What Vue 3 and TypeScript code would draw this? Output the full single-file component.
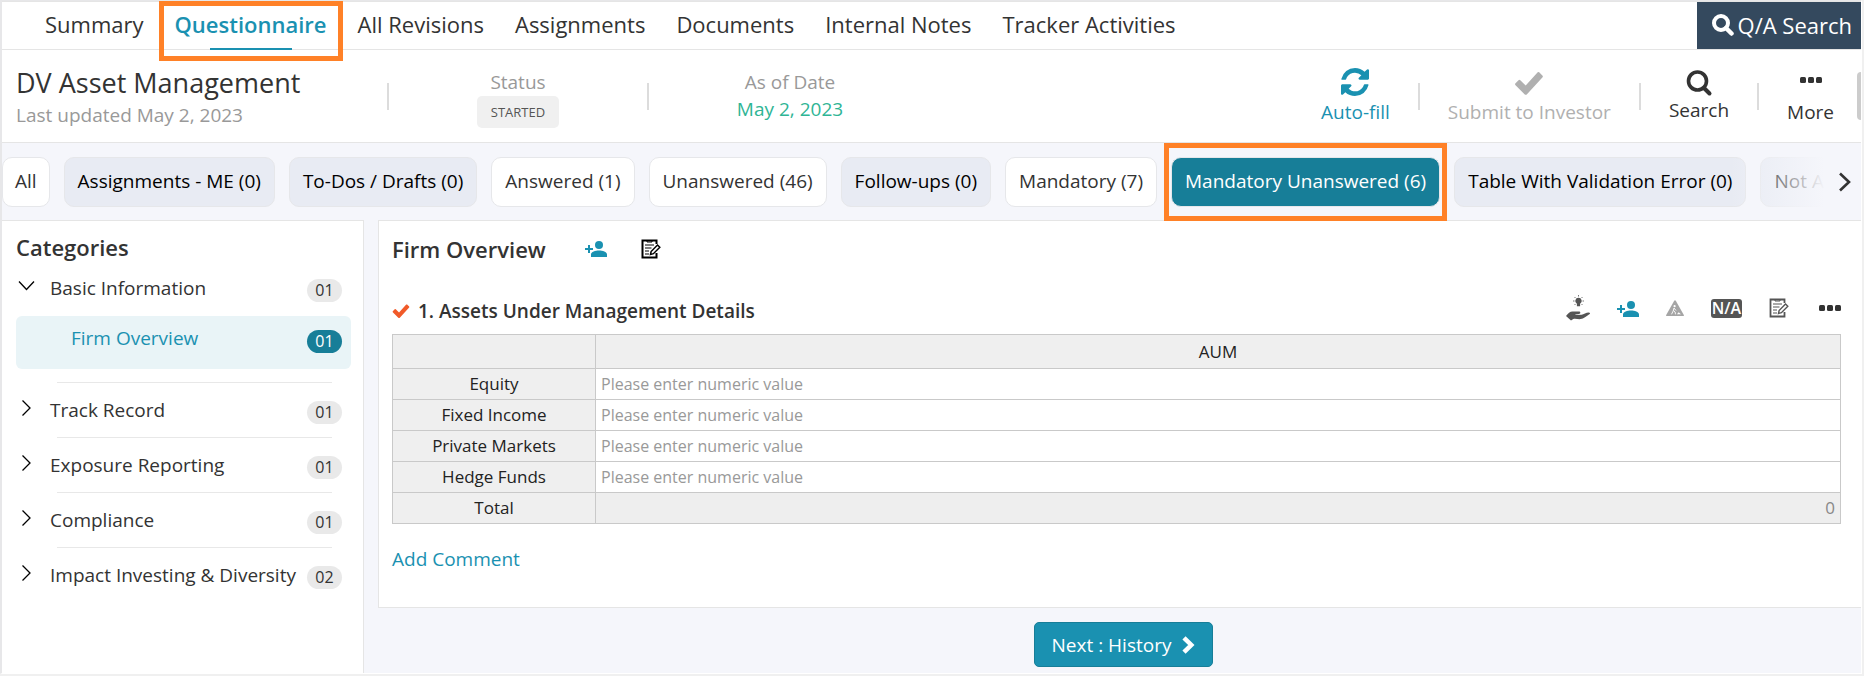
<script setup lang="ts">
import { ref } from 'vue'

interface Filter { label: string; tone: 'plain' | 'muted' | 'active' }
interface Category { name: string; count: string; open?: boolean; children?: { name: string; count: string }[] }

const tabs = ['Summary', 'Questionnaire', 'All Revisions', 'Assignments', 'Documents', 'Internal Notes', 'Tracker Activities']
const activeTab = 'Questionnaire'

const filters: Filter[] = [
  { label: 'All', tone: 'plain' },
  { label: 'Assignments - ME (0)', tone: 'muted' },
  { label: 'To-Dos / Drafts (0)', tone: 'muted' },
  { label: 'Answered (1)', tone: 'plain' },
  { label: 'Unanswered (46)', tone: 'plain' },
  { label: 'Follow-ups (0)', tone: 'muted' },
  { label: 'Mandatory (7)', tone: 'plain' },
  { label: 'Mandatory Unanswered (6)', tone: 'active' },
  { label: 'Table With Validation Error (0)', tone: 'muted' },
  { label: 'Not Applicable (0)', tone: 'muted' },
]

const categories: Category[] = [
  { name: 'Basic Information', count: '01', open: true, children: [{ name: 'Firm Overview', count: '01' }] },
  { name: 'Track Record', count: '01' },
  { name: 'Exposure Reporting', count: '01' },
  { name: 'Compliance', count: '01' },
  { name: 'Impact Investing & Diversity', count: '02' },
]

const rows = ref([
  { name: 'Equity', value: '' },
  { name: 'Fixed Income', value: '' },
  { name: 'Private Markets', value: '' },
  { name: 'Hedge Funds', value: '' },
])
</script>

<template>
  <div class="page">
    <nav class="tabs">
      <a v-for="t in tabs" :key="t" href="#" class="tab" :class="{ current: t === activeTab }">{{ t }}</a>
      <button type="button" class="qa">
        <svg width="22" height="22" viewBox="0 0 22 22" fill="none" stroke="currentColor" aria-hidden="true">
          <circle cx="9" cy="9" r="7" stroke-width="4" />
          <path d="M14 14l5.500 5.500" stroke-width="4.500" stroke-linecap="round" />
        </svg>
        Q/A Search
      </button>
    </nav>

    <header class="head">
      <div class="title">
        <h1>DV Asset Management</h1>
        <p>Last updated May 2, 2023</p>
      </div>
      <i class="sep"></i>
      <div class="meta status">
        <span class="meta-label">Status</span>
        <span class="tag">STARTED</span>
      </div>
      <i class="sep"></i>
      <div class="meta date">
        <span class="meta-label">As of Date</span>
        <span class="meta-date">May 2, 2023</span>
      </div>
      <div class="actions">
        <button type="button" class="action teal">
          <svg width="28" height="28" viewBox="0 0 1536 1536" fill="currentColor" aria-hidden="true">
            <path d="M1511 928q0 5-1 7-64 268-268 434.500T764 1536q-146 0-282.500-55T238 1324l-129 129q-19 19-45 19t-45-19-19-45V960q0-26 19-45t45-19h448q26 0 45 19t19 45-19 45l-137 137q71 66 161 102t187 36q134 0 250-65t186-179q11-17 53-117 8-23 30-23h192q13 0 22.500 9.500t9.500 22.500zm25-800v448q0 26-19 45t-45 19h-448q-26 0-45-19t-19-45 19-45l138-138Q969 256 768 256q-134 0-250 65T332 500q-11 17-53 117-8 23-30 23H50q-13 0-22.500-9.500T18 608v-7q65-268 270-434.500T768 0q146 0 284 55.500T1297 212l130-129q19-19 45-19t45 19 19 45z" />
          </svg>
          <span>Auto-fill</span>
        </button>
        <i class="sep"></i>
        <button type="button" class="action off" disabled>
          <svg width="30" height="26" viewBox="0 0 30 26" fill="currentColor" aria-hidden="true">
            <path d="M4.500 10.200 L1.300 13.600 Q.8 14.200 1.300 14.900 L10.500 24.300 Q11.800 25.300 13 24.300 L28.600 7.200 Q29.200 6.500 28.600 5.700 L25.200 2.300 Q24.400 1.700 23.700 2.300 L11.700 15.400 L6.300 10.200 Q5.400 9.500 4.500 10.200Z" />
          </svg>
          <span>Submit to Investor</span>
        </button>
        <i class="sep"></i>
        <button type="button" class="action search">
          <svg width="28" height="28" viewBox="0 0 28 28" fill="none" stroke="currentColor" aria-hidden="true">
            <circle cx="12.500" cy="12" r="9" stroke-width="3.600" />
            <path d="M19 19l5.500 5.500" stroke-width="4" stroke-linecap="round" />
          </svg>
          <span>Search</span>
        </button>
        <i class="sep"></i>
        <button type="button" class="action more">
          <svg width="22" height="6" viewBox="0 0 22 6" fill="currentColor" aria-hidden="true">
            <rect width="6" height="6" rx="1.500" /><rect x="8" width="6" height="6" rx="1.500" /><rect x="16" width="6" height="6" rx="1.500" />
          </svg>
          <span>More</span>
        </button>
        <i class="thumb"></i>
      </div>
    </header>

    <div class="filters">
      <button v-for="f in filters" :key="f.label" type="button" class="chip" :class="f.tone">{{ f.label }}</button>
      <button type="button" class="next-filters" aria-label="Scroll filters">
        <svg width="14" height="20" viewBox="0 0 14 20" fill="none" stroke="currentColor" stroke-width="2.600" aria-hidden="true">
          <path d="M2 1.500l9 8.500-9 8.500" />
        </svg>
      </button>
    </div>

    <div class="body">
      <aside class="side">
        <h2>Categories</h2>
        <ul class="cats">
          <li v-for="c in categories" :key="c.name">
            <button type="button" class="cat" :aria-expanded="!!c.open">
              <svg width="18" height="18" viewBox="0 0 18 18" fill="none" stroke="currentColor" stroke-width="1.300" aria-hidden="true">
                <path v-if="c.open" d="M2 4.500L9.500 12.500l7.500-8" />
                <path v-else d="M5.500 1.500L13 9l-7.500 7.500" />
              </svg>
              <span class="cat-name">{{ c.name }}</span>
              <span class="count">{{ c.count }}</span>
            </button>
            <a v-for="s in c.children" :key="s.name" href="#" class="sub">
              <span class="sub-name">{{ s.name }}</span>
              <span class="count on">{{ s.count }}</span>
            </a>
          </li>
        </ul>
      </aside>

      <main class="main">
        <section class="card">
          <div class="section-head">
            <h2>Firm Overview</h2>
            <button type="button" class="icon teal" aria-label="Assign section">
              <svg width="22" height="16" viewBox="0 0 22 16" fill="currentColor" aria-hidden="true">
                <circle cx="14" cy="4" r="4" /><path d="M6 16v-2.500C6 10.800 10.500 9.500 14 9.500s8 1.300 8 4V16zM3 4h2v3h3v2H5v3H3V9H0V7h3z" />
              </svg>
            </button>
            <button type="button" class="icon black" aria-label="Section notes">
              <svg width="20" height="20" viewBox="0 0 20 20" fill="none" stroke="currentColor" aria-hidden="true">
                <path d="M15.500 5V1.500H1.500V18.500H15.500V14" stroke-width="2" /><path d="M6 1.500h5v1.500H6z" stroke-width="1" />
                <path d="M4 6h9M4 9h6.500M4 12h4M4 15h4" stroke-width="1.200" />
                <path d="M9.500 15.500l.6-3L16.500 6l2.300 2.200-6.400 6.500z" stroke-width="1.500" fill="#fff" />
              </svg>
            </button>
          </div>

          <div class="question">
            <svg class="tick" width="18" height="16" viewBox="0 0 30 26" fill="currentColor" aria-hidden="true">
              <path d="M4.500 10.200 L1.300 13.600 Q.8 14.200 1.300 14.900 L10.500 24.300 Q11.800 25.300 13 24.300 L28.600 7.200 Q29.200 6.500 28.600 5.700 L25.200 2.300 Q24.400 1.700 23.700 2.300 L11.700 15.400 L6.300 10.200 Q5.400 9.500 4.500 10.200Z" />
            </svg>
            <h3>1. Assets Under Management Details</h3>
            <div class="tools">
              <button type="button" class="icon" aria-label="Suggest answer">
                <svg width="24" height="26" viewBox="0 0 24 26" fill="currentColor" aria-hidden="true">
                  <path d="M12.500 2.800a3.200 3.200 0 0 0-1.600 6v2.400h3.200V8.800a3.200 3.200 0 0 0-1.600-6z" />
                  <path d="M12.500 0v1.500M7 6h1.500M16.500 6H18M8.500 2l1 1M16.500 2l-1 1M8.500 10l1-1M16.500 10l-1-1" stroke="currentColor" stroke-width=".8" />
                  <path d="M0 21c2-2.700 4-4.500 6.500-4.500h6.300c2 0 2 2.100.2 2.400l-3.600.5v.6l6.200-.2c2-.6 4.600-2.300 7-2.300 1.700 0 1.800 1.100.7 1.800-2.600 1.700-6 4.500-8.500 4.800-2.500.3-5.500-.7-7.500-.1L5 25.500z" />
                </svg>
              </button>
              <button type="button" class="icon teal low" aria-label="Assign question">
                <svg width="22" height="16" viewBox="0 0 22 16" fill="currentColor" aria-hidden="true">
                  <circle cx="14" cy="4" r="4" /><path d="M6 16v-2.500C6 10.800 10.500 9.500 14 9.500s8 1.300 8 4V16zM3 4h2v3h3v2H5v3H3V9H0V7h3z" />
                </svg>
              </button>
              <button type="button" class="icon gray" aria-label="Work in progress">
                <svg width="18" height="16" viewBox="0 0 18 16" fill="currentColor" aria-hidden="true">
                  <path d="M8.200 .8q.8-1.200 1.600 0L17.800 15q.4 1-.6 1H.8q-1 0-.6-1z" />
                  <circle cx="8.600" cy="6.200" r="1.100" fill="#fff" />
                  <path d="M8 8L7.200 11l-1.700 3.300M7.500 10.500l1.600 1.500.4 2.300M8 8l2 2.500" stroke="#fff" stroke-width=".9" fill="none" />
                  <path d="M11 14.300l1.600-2 2.400 2z" fill="#fff" />
                </svg>
              </button>
              <button type="button" class="na">N/A</button>
              <button type="button" class="icon" aria-label="Question notes">
                <svg width="20" height="20" viewBox="0 0 20 20" fill="none" stroke="currentColor" aria-hidden="true">
                  <path d="M15.500 5V1.500H1.500V18.500H15.500V14" stroke-width="1.800" /><path d="M6 1.500h5v1.500H6z" stroke-width="1" />
                  <path d="M4 6h9M4 9h6.500M4 12h4M4 15h4" stroke-width="1.200" />
                  <path d="M9.500 15.500l.6-3L16.500 6l2.300 2.200-6.400 6.500z" stroke-width="1.400" fill="#fff" />
                </svg>
              </button>
              <button type="button" class="icon dark" aria-label="More options">
                <svg width="22" height="6" viewBox="0 0 22 6" fill="currentColor" aria-hidden="true">
                  <rect width="6" height="6" rx="1.500" /><rect x="8" width="6" height="6" rx="1.500" /><rect x="16" width="6" height="6" rx="1.500" />
                </svg>
              </button>
            </div>
          </div>

          <table class="grid">
            <thead>
              <tr><th class="name"></th><th>AUM</th></tr>
            </thead>
            <tbody>
              <tr v-for="(r, i) in rows" :key="r.name">
                <th class="name" scope="row"><label :for="'v' + i">{{ r.name }}</label></th>
                <td><input :id="'v' + i" v-model="r.value" type="text" placeholder="Please enter numeric value" /></td>
              </tr>
              <tr>
                <th class="name" scope="row">Total</th>
                <td class="total">0</td>
              </tr>
            </tbody>
          </table>

          <a href="#" class="comment">Add Comment</a>
        </section>

        <div class="foot">
          <button type="button" class="next">
            Next : History
            <svg width="13" height="18" viewBox="0 0 13 18" fill="none" stroke="currentColor" stroke-width="4.500" aria-hidden="true">
              <path d="M2 1.800l7.300 7.200L2 16.200" />
            </svg>
          </button>
        </div>
      </main>
    </div>
  </div>
</template>

<style>
body { background: #f0f0f0; }
</style>

<style scoped>
* { box-sizing: border-box; }
h1, h2, h3, p, ul { margin: 0; padding: 0; }
button { font: inherit; color: inherit; background: none; border: 0; padding: 0; cursor: pointer; }
a { text-decoration: none; }
svg { display: block; flex: none; }

.page {
  display: flex;
  flex-direction: column;
  min-height: calc(100vh - 3px);
  margin-right: 2px;
  border: solid #e7e7e9;
  border-width: 1px 0 0 2px;
  border-right: 1px solid #fff;
  border-bottom: 1px solid #fff;
  background: #f5f6fb;
  color: #333;
  font-family: "Open Sans", "Noto Sans", sans-serif;
  font-size: 19px;
  line-height: 26px;
}

.tabs {
  display: flex;
  align-items: stretch;
  gap: 31px;
  height: 49px;
  padding-left: 43px;
  border-bottom: 1px solid #e5e5e5;
  border-top: 1px solid #e5e5e5;
  background: #fff;
}
.tab { position: relative; color: #333; font-size: 22px; line-height: 44px; white-space: nowrap; }
.tab.current { color: #1a91b1; font-weight: 600; }
.tab.current::before {
  content: "";
  position: absolute;
  inset: -1px -16px -12px -16px;
  border: 5px solid #ff8127;
  z-index: 1;
}
.tab.current::after {
  content: "";
  position: absolute;
  bottom: -1px;
  left: 35px;
  right: 35px;
  height: 2px;
  background: #1a91b1;
}
.qa {
  display: flex;
  align-items: center;
  gap: 4px;
  margin-left: auto;
  padding: 0 9px 2px 15px;
  background: #34495e;
  color: #fff;
  font-size: 22px;
  white-space: nowrap;
}

.head {
  display: flex;
  height: 93px;
  padding: 18px 0 0 14px;
  border-bottom: 1px solid #e5e5e5;
  background: #fff;
}
.title { width: 371px; }
h1 { font-size: 27px; line-height: 30px; font-weight: 400; }
.title p { margin-top: 4px; color: #999; font-weight: 500; }
.sep { flex: none; width: 2px; height: 27px; margin-top: 15px; background: #dcdcdc; }
.meta { display: flex; flex-direction: column; align-items: center; white-space: nowrap; }
.status { width: 258px; }
.date { width: 282px; }
.meta-label { color: #999; font-weight: 500; line-height: 28px; }
.tag {
  padding: 0 14px;
  border-radius: 5px;
  background: #f0f0f0;
  color: #555;
  font-size: 13px;
  line-height: 32px;
}
.meta-date { color: #2fb595; line-height: 26px; }
.actions { display: flex; margin-left: auto; }
.action { display: flex; flex-direction: column; align-items: center; justify-content: space-between; height: 57px; white-space: nowrap; }
.action svg { margin-bottom: auto; }
.action.teal { margin-right: 28px; }
.action.off { margin: 0 28px; color: #b0b0b0; cursor: default; }
.action.off svg { margin-top: 2px; }
.action.search { height: 54px; margin: 0 28px; }
.action.search svg { margin-top: 1px; }
.action.more { margin: 0 23px 0 28px; }
.action.more svg { margin-top: 9px; }
.thumb { width: 4px; height: 48px; margin-top: 4px; border-radius: 4px 0 0 4px; background: #ccc; }
.teal { color: #1a91b1; }

.filters {
  position: relative;
  display: flex;
  gap: 14px;
  padding: 14px 0 13px;
  background: #f5f6fb;
  overflow-x: clip;
  overflow-y: visible;
}
.chip {
  position: relative;
  flex: none;
  height: 50px;
  padding: 0 13px 2px;
  border: 1px solid #e6e7ea;
  border-radius: 10px;
  background: #fff;
  white-space: nowrap;
}
.chip:first-child { padding-left: 12px; padding-right: 12px; }
.chip.muted { background: #e8ebf3; color: #000; }
.chip.active { background: #177e98; color: #fff; }
.chip.active::after {
  content: "";
  position: absolute;
  inset: -15px -8px;
  border: 5px solid #ff8127;
}
.next-filters {
  position: absolute;
  top: 0;
  right: 0;
  bottom: 0;
  display: flex;
  align-items: center;
  justify-content: flex-end;
  width: 130px;
  padding-right: 9px;
  background: linear-gradient(to right, rgba(245, 246, 251, 0), #f5f6fb 72%);
}

.body { display: flex; flex: 1; gap: 14px; }
.side {
  width: 362px;
  padding: 12px 12px 0 14px;
  border: solid #e5e5e5;
  border-width: 1px 1px 0 0;
  background: #fff;
}
h2 { font-size: 22px; line-height: 28px; font-weight: 600; }
.cats { list-style: none; margin-top: 12px; }
.cats li + li { padding-top: 12px; }
.cats li + li::before {
  content: "";
  display: block;
  height: 1px;
  margin: 0 19px 12px 41px;
  background: #e8e8e8;
}
.cat { display: flex; align-items: center; width: 100%; height: 30px; padding: 0 9px 0 1px; text-align: left; }
.cat svg { margin: 0 15px 4px 0; color: #000; }
.cat-name { flex: 1; white-space: nowrap; }
.count {
  min-width: 35px;
  margin-top: 5px;
  border-radius: 12px;
  background: #e9e9e9;
  color: #333;
  font-size: 16px;
  line-height: 23px;
  text-align: center;
}
.count.on { background: #177e98; color: #fff; }
.sub {
  display: flex;
  align-items: flex-start;
  height: 53px;
  margin: 13px 0 1px;
  padding: 9px 9px 0 55px;
  border-radius: 6px;
  background: #e9f4f7;
  color: #1a91b1;
}
.sub-name { flex: 1; }

.main { flex: 1; min-width: 0; }
.card {
  padding: 14px 20px 35px 13px;
  border: solid #e5e5e5;
  border-width: 1px 0 1px 1px;
  background: #fff;
}
.section-head { display: flex; align-items: center; }
.section-head .icon { margin-left: 34px; }
.section-head h2 { margin-right: 5px; }
.icon { color: #555; }
.icon.teal { color: #1a91b1; }
.icon.black { color: #000; }
.icon.gray { color: #a5a5a5; }
.icon.dark { color: #333; margin-left: 3px; }
.tools .low { margin-top: 2px; }
.question { display: flex; align-items: center; height: 46px; margin-top: 25px; }
.tick { margin-right: 8px; color: #f15a29; }
h3 { font-size: 19px; font-weight: 600; line-height: 26px; }
.tools { display: flex; align-items: center; gap: 27px; margin-left: auto; padding-bottom: 6px; }
.na {
  height: 19px;
  padding: 0 1px;
  border-radius: 3px;
  background: #555;
  color: #fff;
  font-size: 16px;
  font-weight: 600;
  line-height: 19px;
}
.grid { width: 100%; border-collapse: collapse; font-size: 17px; line-height: 24px; }
.grid th, .grid td { height: 31px; padding: 0; border: 1px solid #c9c9c9; font-weight: 400; text-align: center; color: #222; }
.grid thead th { height: 34px; background: #efefef; }
.grid .name { width: 203px; background: #efefef; }
.grid .total { padding: 0 5px; background: #eee; color: #888; text-align: right; }
.grid input {
  display: block;
  width: 100%;
  height: 29px;
  padding: 0 5px;
  border: 0;
  outline: 0;
  background: #fff;
  font: inherit;
  font-size: 16px;
}
.grid input::placeholder { color: #999; opacity: 1; }
.comment { display: inline-block; margin-top: 22px; color: #1a91b1; }
.foot { display: flex; justify-content: center; padding: 14px 0 6px 8px; }
.next {
  display: flex;
  align-items: center;
  gap: 11px;
  height: 45px;
  padding: 0 17px;
  border: 1px solid #177e98;
  border-radius: 5px;
  background: #1a91b1;
  color: #fff;
}
</style>
